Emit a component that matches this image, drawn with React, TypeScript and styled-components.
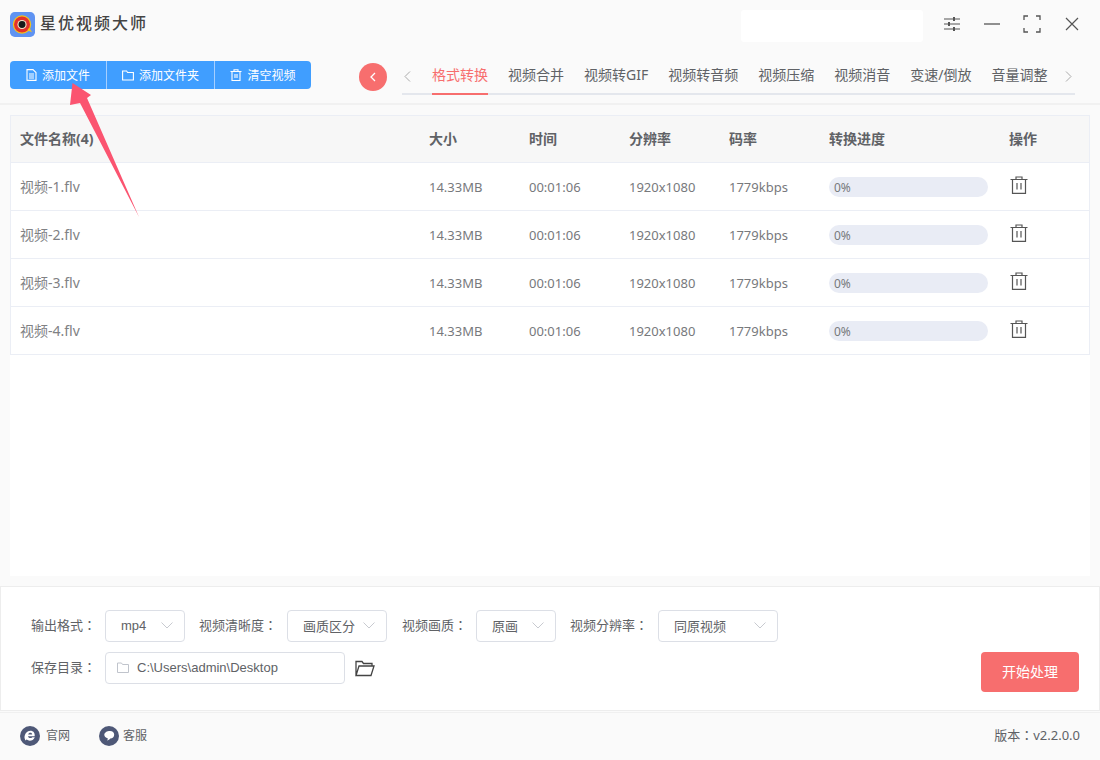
import React from "react";
import styled, { createGlobalStyle } from "styled-components";

const Global = createGlobalStyle`
  html, body { margin: 0; padding: 0; }
  body { font-family: "Noto Sans", "Noto Sans CJK SC", sans-serif; background: #fafafa; }
  * { box-sizing: border-box; }
`;

const Page = styled.div`
  position: relative;
  width: 1100px;
  height: 760px;
  background: #fafafa;
  display: flex;
  flex-direction: column;
  overflow: hidden;
`;

const TitleBar = styled.header`
  height: 48px;
  display: flex;
  align-items: center;
  padding-left: 10px;
`;
const Logo = styled.svg`
  width: 25px;
  height: 25px;
  margin: 1px 5px 0 0;
`;
const AppName = styled.h1`
  margin: 0 0 2px;
  font-size: 16px;
  line-height: 22px;
  font-weight: 500;
  letter-spacing: 2px;
  color: #444;
`;
const TitleSpacer = styled.div`
  flex: 1;
`;
const Blank = styled.div`
  width: 182px;
  height: 32px;
  background: #fff;
  border-radius: 3px;
  margin: 3px 9px 0 0;
`;
const WinButton = styled.button`
  width: 40px;
  height: 32px;
  border: 0;
  padding: 0;
  background: none;
  display: flex;
  align-items: center;
  justify-content: center;
  color: #555;
`;
const WinGroup = styled.div`
  display: flex;
  padding-right: 8px;
`;

const ToolBar = styled.div`
  height: 57px;
  padding: 13px 0 0 10px;
  display: flex;
  align-items: flex-start;
  border-bottom: 2px solid #f1f1f1;
`;
const ButtonGroup = styled.div`
  display: flex;
  height: 28px;
  width: 301px;
  background: #409eff;
  border-radius: 4px;
  overflow: hidden;
`;
const ToolButton = styled.button<{ $w: number; $last?: boolean }>`
  width: ${(p) => p.$w}px;
  height: 28px;
  border: 0;
  border-right: ${(p) => (p.$last ? "0" : "1px solid #a6cfff")};
  background: none;
  color: #fff;
  font: inherit;
  font-size: 12px;
  padding: 0;
  display: flex;
  align-items: center;
  justify-content: center;
  gap: 5px;
`;
const BackCircle = styled.button`
  width: 28px;
  height: 28px;
  border-radius: 50%;
  border: 0;
  padding: 0;
  margin-left: 48px;
  margin-top: 2px;
  background: #f76e6e;
  display: flex;
  align-items: center;
  justify-content: center;
`;
const Tabs = styled.nav`
  position: relative;
  width: 673px;
  height: 34px;
  margin-left: 15px;
  border-bottom: 2px solid #e4e7ed;
  display: flex;
  align-items: flex-start;
  padding: 4px 0 0 2px;
`;
const TabArrow = styled.span`
  flex: none;
  width: 28px;
  height: 22px;
  display: flex;
  align-items: center;
`;
const TabArrowRight = styled(TabArrow)`
  margin-left: 18px;
  width: 7px;
`;
const TabList = styled.div`
  flex: none;
  display: flex;
  gap: 20px;
`;
const Tab = styled.div<{ $active?: boolean }>`
  position: relative;
  font-size: 14px;
  line-height: 20px;
  height: 32px;
  color: ${(p) => (p.$active ? "#f76e6e" : "#606266")};
  white-space: nowrap;
  &::after {
    content: "";
    display: ${(p) => (p.$active ? "block" : "none")};
    position: absolute;
    left: 0;
    right: 0;
    top: 28px;
    height: 2px;
    background: #f76e6e;
  }
`;

const Content = styled.main`
  flex: 1;
  margin: 10px 10px;
  background: #fff;
`;
const Table = styled.div`
  border: 1px solid #ebeef5;
`;
const RowGrid = styled.div<{ $head?: boolean }>`
  display: grid;
  grid-template-columns: 408px 100px 100px 100px 100px 180px 90px;
  height: ${(p) => (p.$head ? "47px" : "48px")};
  align-items: center;
  background: ${(p) => (p.$head ? "#f7f7f7" : "#fff")};
  border-bottom: 1px solid #ebeef5;
  &:last-child {
    border-bottom: 0;
    height: 47px;
  }
`;
const HeadCell = styled.div`
  font-size: 14px;
  line-height: 20px;
  font-weight: 700;
  color: #606266;
  padding: 0 0 0 10px;
`;
const FirstHeadCell = styled(HeadCell)`
  padding-left: 9px;
`;
const Cell = styled.div`
  font-size: 13px;
  line-height: 20px;
  color: #77797c;
  padding-left: 10px;
`;
const NameCell = styled(Cell)`
  font-size: 14px;
  padding-left: 9px;
  color: #808184;
`;
const Progress = styled.div`
  width: 159px;
  height: 20px;
  border-radius: 10px;
  background: #e9ecf5;
  font-size: 12px;
  line-height: 22px;
  padding-left: 5px;
  color: #77797c;
`;
const ProgressCell = styled.div`
  padding-left: 10px;
`;
const TrashCell = styled.div`
  padding-left: 11px;
  height: 47px;
  display: flex;
  align-items: flex-start;
  padding-top: 13px;
`;

const Settings = styled.section`
  height: 125px;
  background: #fff;
  border: 1px solid #ededed;
  padding: 23px 20px 0 30px;
  position: relative;
  display: flex;
  flex-direction: column;
  gap: 10px;
  font-family: "Liberation Sans", "Noto Sans CJK SC", sans-serif;
`;
const FormRow = styled.div`
  display: flex;
  align-items: center;
  height: 32px;
`;
const Label = styled.label<{ $w: number }>`
  width: ${(p) => p.$w}px;
  font-size: 13px;
  line-height: 18px;
  padding-bottom: 2px;
  color: #606266;
  white-space: nowrap;
`;
const Colon = styled.span`
  font-family: "Noto Sans CJK TC", sans-serif;
`;
const Select = styled.div<{ $w: number; $mr: number }>`
  width: ${(p) => p.$w}px;
  height: 32px;
  margin-right: ${(p) => p.$mr}px;
  border: 1px solid #dcdfe6;
  border-radius: 4px;
  display: flex;
  align-items: center;
  justify-content: space-between;
  padding: 0 10px 2px 15px;
  font-size: 13px;
  color: #606266;
  background: #fff;
`;
const PathBox = styled.div`
  width: 240px;
  height: 32px;
  border: 1px solid #dcdfe6;
  border-radius: 4px;
  display: flex;
  align-items: center;
  gap: 8px;
  padding: 0 0 2px 11px;
  font-size: 13px;
  color: #606266;
`;
const OpenFolder = styled.button`
  border: 0;
  background: none;
  padding: 0;
  margin-left: 10px;
  display: flex;
`;
const StartButton = styled.button`
  position: absolute;
  right: 20px;
  top: 65px;
  width: 98px;
  height: 40px;
  border: 0;
  border-radius: 4px;
  background: #f76e6e;
  color: #fff;
  font: inherit;
  font-size: 14px;
  padding: 0 0 2px;
`;

const Footer = styled.footer`
  height: 48px;
  border-top: 1px solid #f0f0f0;
  display: flex;
  align-items: center;
  padding: 0 20px 1px;
  margin-top: 1px;
`;
const FootLink = styled.a`
  display: flex;
  align-items: center;
  gap: 6px;
  font-size: 12px;
  color: #606266;
  margin-right: 29px;
`;
const FootLinkTight = styled(FootLink)`
  gap: 4px;
`;
const FootText = styled.span`
  margin-bottom: 2px;
`;
const Version = styled.div`
  margin: 0 0 3px auto;
  font-size: 13px;
  color: #606266;
`;

const ArrowOverlay = styled.svg`
  position: absolute;
  left: 60px;
  top: 75px;
  width: 90px;
  height: 150px;
  pointer-events: none;
`;

const Chevron = () => (
  <svg width="14" height="14" viewBox="0 0 14 14" fill="none" stroke="#c8cad0" strokeWidth="1">
    <path d="M1.5 4.5 7 10l5.5-5.5" />
  </svg>
);

const Trash = () => (
  <svg width="18" height="18" viewBox="0 0 18 18" fill="none" stroke="#555" strokeWidth="1.2">
    <path d="M0.5 3.5h17M6 3.5V1h6v2.5M2.5 3.5v13.8h13V3.5M7 7v6.5M11 7v6.5" />
  </svg>
);

const rows = ["视频-1.flv", "视频-2.flv", "视频-3.flv", "视频-4.flv"];
const tabs = ["格式转换", "视频合并", "视频转GIF", "视频转音频", "视频压缩", "视频消音", "变速/倒放", "音量调整"];

export default function App() {
  return (
    <Page>
      <Global />
      <TitleBar>
        <Logo viewBox="0 0 26 26">
          <rect width="26" height="26" rx="5" fill="#5f93f2" />
          <circle cx="12.5" cy="13" r="9.5" fill="#f5c518" />
          <circle cx="12.5" cy="13" r="8.3" fill="#e3312c" />
          <path d="M18 19l5 2-3-5z" fill="#f5c518" />
          <circle cx="12.5" cy="13" r="4.8" fill="#f3e6c8" />
          <circle cx="12.5" cy="13" r="3.6" fill="#1a1a1a" />
        </Logo>
        <AppName>星优视频大师</AppName>
        <TitleSpacer />
        <Blank />
        <WinGroup>
          <WinButton aria-label="设置">
            <svg width="16" height="16" viewBox="0 0 16 16" fill="none" stroke="#555" strokeWidth="1.2">
              <path d="M0 3h16M0 8h16M0 13h16" />
              <path d="M10 1v4M5 6v4M10 11v4" strokeWidth="2" />
            </svg>
          </WinButton>
          <WinButton aria-label="最小化">
            <svg width="16" height="16" viewBox="0 0 16 16" stroke="#555" strokeWidth="1.3">
              <path d="M0 8h16" />
            </svg>
          </WinButton>
          <WinButton aria-label="最大化">
            <svg width="18" height="18" viewBox="0 0 18 18" fill="none" stroke="#555" strokeWidth="1.3">
              <path d="M1 5V1h4M13 1h4v4M17 13v4h-4M5 17H1v-4" />
            </svg>
          </WinButton>
          <WinButton aria-label="关闭">
            <svg width="14" height="14" viewBox="0 0 14 14" stroke="#555" strokeWidth="1.2">
              <path d="M1 1l12 12M13 1 1 13" />
            </svg>
          </WinButton>
        </WinGroup>
      </TitleBar>

      <ToolBar>
        <ButtonGroup>
          <ToolButton $w={97}>
            <svg width="11" height="12" viewBox="0 0 11 12" fill="none" stroke="#fff" strokeWidth="1.1">
              <path d="M1 .6h6l3 3v7.8H1zM3 5h5M3 7h5M3 9h5" />
            </svg>
            添加文件
          </ToolButton>
          <ToolButton $w={108}>
            <svg width="12" height="11" viewBox="0 0 12 11" fill="none" stroke="#fff" strokeWidth="1.1">
              <path d="M.6 1h4l1 1.500h5.800v7.500H.6z" />
            </svg>
            添加文件夹
          </ToolButton>
          <ToolButton $w={96} $last>
            <svg width="12" height="12" viewBox="0 0 12 12" fill="none" stroke="#fff" strokeWidth="1.1">
              <path d="M.5 2.500h11M4 2.500V.8h4v1.700M2 2.500v9h8v-9M5 5v4M7 5v4" />
            </svg>
            清空视频
          </ToolButton>
        </ButtonGroup>
        <BackCircle aria-label="返回">
          <svg width="8" height="10" viewBox="0 0 8 10" fill="none" stroke="#fff" strokeWidth="1.3">
            <path d="M6 1 2 5l4 4" />
          </svg>
        </BackCircle>
        <Tabs>
          <TabArrow>
            <svg width="7" height="11" viewBox="0 0 7 11" fill="none" stroke="#aaa" strokeWidth="1">
              <path d="M6 .5 1 5.500l5 5" />
            </svg>
          </TabArrow>
          <TabList>
            {tabs.map((t, i) => (
              <Tab key={t} $active={i === 0}>
                {t}
              </Tab>
            ))}
          </TabList>
          <TabArrowRight>
            <svg width="7" height="11" viewBox="0 0 7 11" fill="none" stroke="#aaa" strokeWidth="1">
              <path d="M1 .5l5 5-5 5" />
            </svg>
          </TabArrowRight>
        </Tabs>
      </ToolBar>

      <Content>
        <Table>
          <RowGrid $head>
            <FirstHeadCell>文件名称(4)</FirstHeadCell>
            <HeadCell>大小</HeadCell>
            <HeadCell>时间</HeadCell>
            <HeadCell>分辨率</HeadCell>
            <HeadCell>码率</HeadCell>
            <HeadCell>转换进度</HeadCell>
            <HeadCell>操作</HeadCell>
          </RowGrid>
          {rows.map((name) => (
            <RowGrid key={name}>
              <NameCell>{name}</NameCell>
              <Cell>14.33MB</Cell>
              <Cell>00:01:06</Cell>
              <Cell>1920x1080</Cell>
              <Cell>1779kbps</Cell>
              <ProgressCell>
                <Progress>0%</Progress>
              </ProgressCell>
              <TrashCell>
                <Trash />
              </TrashCell>
            </RowGrid>
          ))}
        </Table>
      </Content>

      <Settings>
        <FormRow>
          <Label $w={74}>输出格式<Colon>：</Colon></Label>
          <Select $w={80} $mr={14}>
            mp4
            <Chevron />
          </Select>
          <Label $w={88}>视频清晰度<Colon>：</Colon></Label>
          <Select $w={100} $mr={15}>
            画质区分
            <Chevron />
          </Select>
          <Label $w={74}>视频画质<Colon>：</Colon></Label>
          <Select $w={80} $mr={14}>
            原画
            <Chevron />
          </Select>
          <Label $w={88}>视频分辨率<Colon>：</Colon></Label>
          <Select $w={120} $mr={0}>
            同原视频
            <Chevron />
          </Select>
        </FormRow>
        <FormRow>
          <Label $w={74}>保存目录<Colon>：</Colon></Label>
          <PathBox>
            <svg width="12" height="11" viewBox="0 0 12 11" fill="none" stroke="#c0c4cc" strokeWidth="1">
              <path d="M.5 1h4l1 1.500h6v8H.5z" />
            </svg>
            C:\Users\admin\Desktop
          </PathBox>
          <OpenFolder aria-label="打开目录">
            <svg width="20" height="17" viewBox="0 0 20 17" fill="none" stroke="#444" strokeWidth="1.3">
              <path d="M1 15.500V1.500h6l1.500 2H17v2.500M1 15.500h15L19 6H4z" />
            </svg>
          </OpenFolder>
        </FormRow>
        <StartButton>开始处理</StartButton>
      </Settings>

      <Footer>
        <FootLink>
          <svg width="20" height="20" viewBox="0 0 20 20">
            <circle cx="10" cy="10" r="10" fill="#4e5877" />
            <path
              d="M4.500 11.500c0-3.800 2.600-6.800 5.900-6.800 2.900 0 4.700 2.100 4.300 5.600H8c.1 1.900 3 2.500 4.300.9h2.500c-1.500 3.800-5.800 4.300-8.200 2.400-.5.400-1 .8-1.400.9.100-1-.700-1.800-.700-3zM8.200 8.500h4c0-2.300-3.600-2.300-4 0z"
              fill="#fff"
            />
          </svg>
          <FootText>官网</FootText>
        </FootLink>
        <FootLinkTight>
          <svg width="20" height="20" viewBox="0 0 20 20">
            <circle cx="10" cy="10" r="10" fill="#4e5877" />
            <path d="M11 5c2.600 0 4.200 1.700 4.200 3.800S13.500 12.500 11.300 12.500c-.8 1-2 1.700-3.200 2 .5-.7.700-1.400.6-2.200C6.800 11.700 5.300 10.400 5.300 8.800 5.300 6.600 8 5 11 5z" fill="#fff" />
          </svg>
          <FootText>客服</FootText>
        </FootLinkTight>
        <Version>版本<Colon>：</Colon>v2.2.0.0</Version>
      </Footer>

      <ArrowOverlay viewBox="60 75 90 150">
        <path d="M72.500 83 91 95 87 98 139 217 80 103 70 105z" fill="#fb5470" />
      </ArrowOverlay>
    </Page>
  );
}
